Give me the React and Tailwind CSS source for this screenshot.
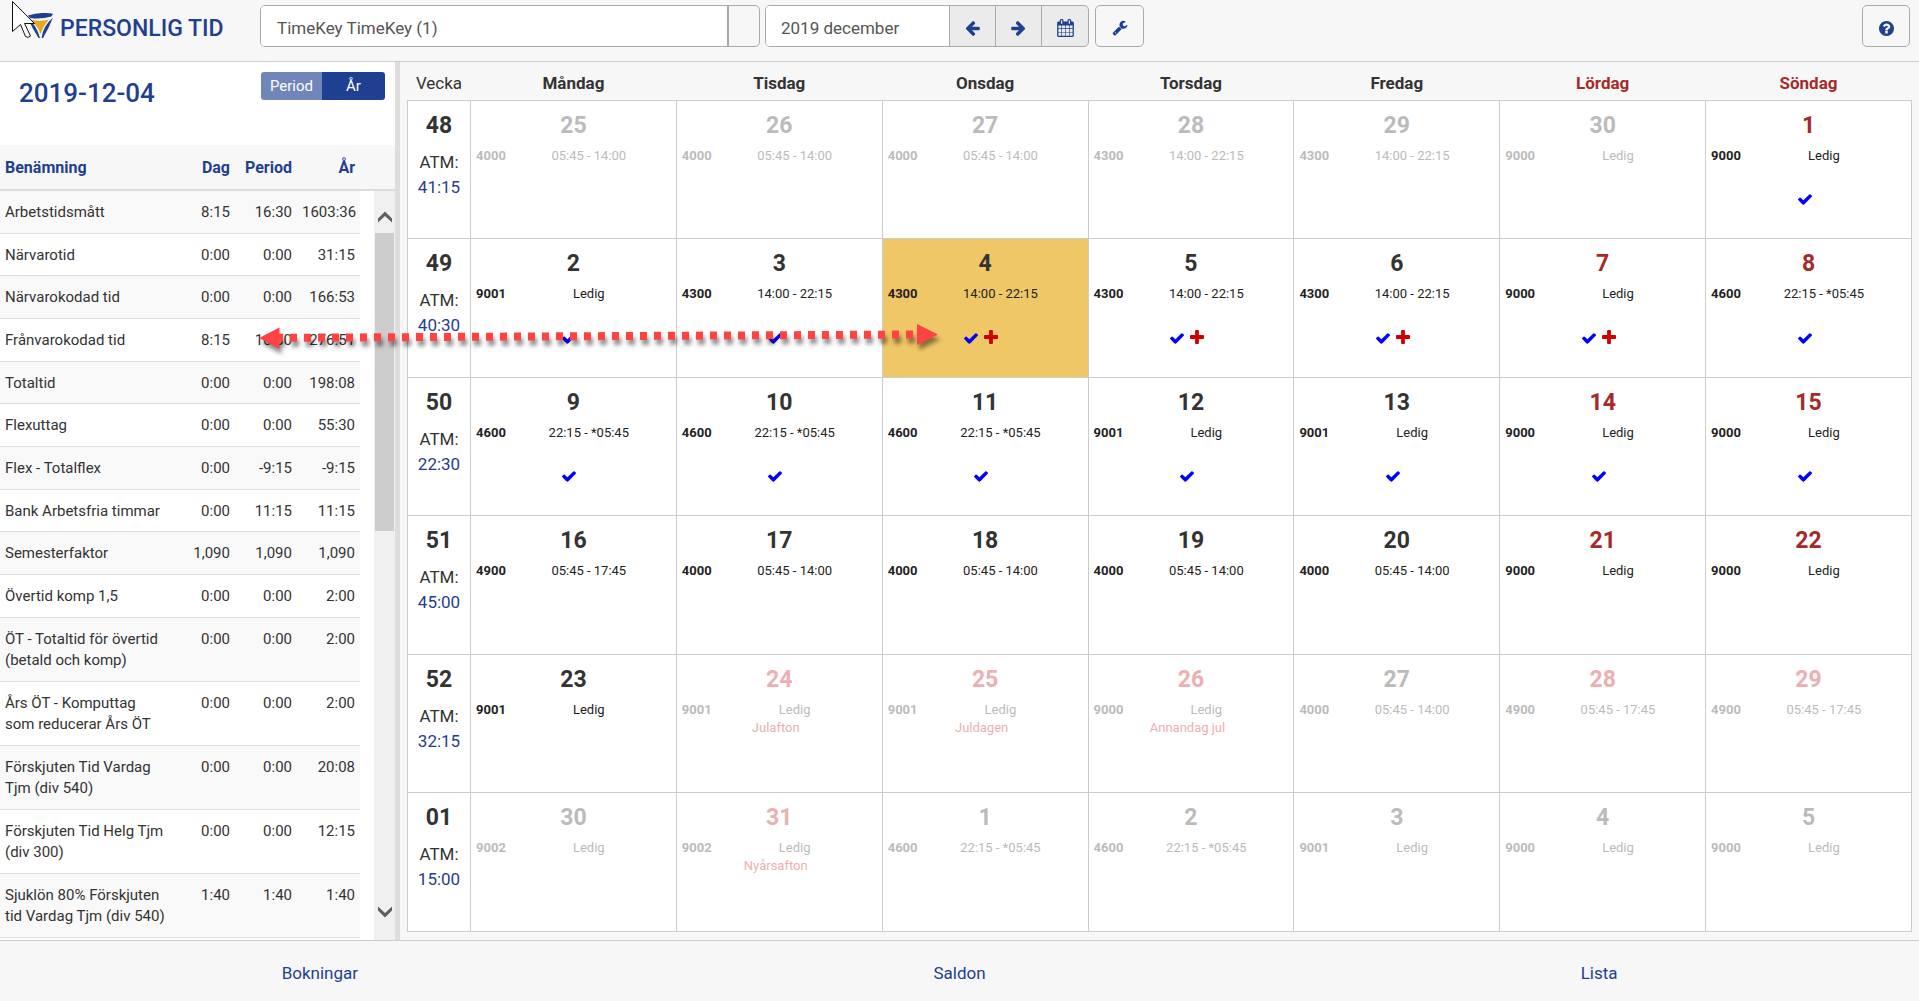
const balances = [
  ["Arbetstidsmått", "8:15", "16:30", "1603:36"],
  ["Närvarotid", "0:00", "0:00", "31:15"],
  ["Närvarokodad tid", "0:00", "0:00", "166:53"],
  ["Frånvarokodad tid", "8:15", "16:30", "276:51"],
  ["Totaltid", "0:00", "0:00", "198:08"],
  ["Flexuttag", "0:00", "0:00", "55:30"],
  ["Flex - Totalflex", "0:00", "-9:15", "-9:15"],
  ["Bank Arbetsfria timmar", "0:00", "11:15", "11:15"],
  ["Semesterfaktor", "1,090", "1,090", "1,090"],
  ["Övertid komp 1,5", "0:00", "0:00", "2:00"],
  ["ÖT - Totaltid för övertid (betald och komp)", "0:00", "0:00", "2:00"],
  ["Års ÖT - Komputtag som reducerar Års ÖT", "0:00", "0:00", "2:00"],
  ["Förskjuten Tid Vardag Tjm (div 540)", "0:00", "0:00", "20:08"],
  ["Förskjuten Tid Helg Tjm (div 300)", "0:00", "0:00", "12:15"],
  ["Sjuklön 80% Förskjuten tid Vardag Tjm (div 540)", "1:40", "1:40", "1:40"],
];

const weekdays = ["Måndag", "Tisdag", "Onsdag", "Torsdag", "Fredag", "Lördag", "Söndag"];

const MORNING = "05:45 - 14:00";
const EVENING = "14:00 - 22:15";
const NIGHT = "22:15 - *05:45";
const LONG = "05:45 - 17:45";
const OFF = "Ledig";

// Day: [number, shift code, hours, tone, marks, holiday]
// Tones: n = normal, r = red day, g = greyed, p = greyed red day
const weeks = [
  { no: "48", atm: "41:15", days: [
    [25, "4000", MORNING, "g"], [26, "4000", MORNING, "g"], [27, "4000", MORNING, "g"],
    [28, "4300", EVENING, "g"], [29, "4300", EVENING, "g"], [30, "9000", OFF, "g"], [1, "9000", OFF, "r", "c"]] },
  { no: "49", atm: "40:30", days: [
    [2, "9001", OFF, "n", "c"], [3, "4300", EVENING, "n", "c"], [4, "4300", EVENING, "n", "cp"],
    [5, "4300", EVENING, "n", "cp"], [6, "4300", EVENING, "n", "cp"], [7, "9000", OFF, "r", "cp"], [8, "4600", NIGHT, "r", "c"]] },
  { no: "50", atm: "22:30", days: [
    [9, "4600", NIGHT, "n", "c"], [10, "4600", NIGHT, "n", "c"], [11, "4600", NIGHT, "n", "c"],
    [12, "9001", OFF, "n", "c"], [13, "9001", OFF, "n", "c"], [14, "9000", OFF, "r", "c"], [15, "9000", OFF, "r", "c"]] },
  { no: "51", atm: "45:00", days: [
    [16, "4900", LONG, "n"], [17, "4000", MORNING, "n"], [18, "4000", MORNING, "n"],
    [19, "4000", MORNING, "n"], [20, "4000", MORNING, "n"], [21, "9000", OFF, "r"], [22, "9000", OFF, "r"]] },
  { no: "52", atm: "32:15", days: [
    [23, "9001", OFF, "n"], [24, "9001", OFF, "p", "", "Julafton"], [25, "9001", OFF, "p", "", "Juldagen"],
    [26, "9000", OFF, "p", "", "Annandag jul"], [27, "4000", MORNING, "g"], [28, "4900", LONG, "p"], [29, "4900", LONG, "p"]] },
  { no: "01", atm: "15:00", days: [
    [30, "9002", OFF, "g"], [31, "9002", OFF, "p", "", "Nyårsafton"], [1, "4600", NIGHT, "g"],
    [2, "4600", NIGHT, "g"], [3, "9001", OFF, "g"], [4, "9000", OFF, "g"], [5, "9000", OFF, "g"]] },
];

const numberTone = { n: "text-[#333]", r: "text-[#a52a2a]", g: "text-[#bbb]", p: "text-[#ecb0b0]" };
const detailTone = { n: "text-[#222]", r: "text-[#222]", g: "text-[#bbb]", p: "text-[#bbb]" };

function Logo() {
  return (
    <svg className="h-[26px] w-[26px] shrink-0" viewBox="0 0 26 26" aria-hidden="true">
      <path d="M0 2.500 Q13 -1.500 25 .8 L23.500 3.500 Q13 6.500 2 5 Z" fill="#1f4090" />
      <path d="M2 6.500 Q12 9 21 6.500 Q15 13 12.800 21 Q9 12 2 6.500Z" fill="#e6a820" />
      <path d="M25 4.500 Q21 15 15 25 H13.500 Q15 13 25 4.500Z M0 5.500 Q9 13 12 25 H10.500 Q4 15 0 5.500Z" fill="#1f4090" />
    </svg>
  );
}

function Pointer() {
  return (
    <svg className="pointer-events-none absolute left-3 top-0 h-[39px] w-[24px]" viewBox="0 0 24 39" aria-hidden="true">
      <path d="M.5 1.500 V31.500 L8.500 24.500 L13.500 36.500 Q16 38.500 18.500 36 L12.500 23.500 H22.500 Z" fill="#fff" stroke="#111" strokeWidth="1" />
    </svg>
  );
}

function ArrowIcon({ flip }) {
  return (
    <svg className={flip ? "h-[17px] w-[17px] rotate-180" : "h-[17px] w-[17px]"} viewBox="0 0 1792 1792" fill="#1f4090" aria-hidden="true">
      <path d="M1664 896v128q0 53-32.500 90.500t-84.500 37.500h-704l293 294q38 36 38 90t-38 90l-75 76q-37 37-90 37-52 0-91-37l-651-652q-37-37-37-90 0-52 37-91l651-650q38-38 91-38 52 0 90 38l75 74q38 38 38 91t-38 91l-293 293h704q52 0 84.500 37.500t32.500 90.500z" transform="translate(0 -64)" />
    </svg>
  );
}

function CalendarIcon() {
  return (
    <svg className="h-[18px] w-[17px]" viewBox="0 0 1664 1792" fill="#1f4090" aria-hidden="true">
      <path d="M128 1664h288v-288h-288v288zm352 0h320v-288h-320v288zm-352-352h288v-320h-288v320zm352 0h320v-320h-320v320zm-352-384h288v-288h-288v288zm736 736h320v-288h-320v288zm-384-736h320v-288h-320v288zm768 736h288v-288h-288v288zm-384-352h320v-320h-320v320zm-352-864v-288q0-13-9.500-22.500t-22.500-9.500h-64q-13 0-22.500 9.500t-9.500 22.500v288q0 13 9.500 22.500t22.500 9.500h64q13 0 22.500-9.500t9.500-22.500zm736 864h288v-320h-288v320zm-384-384h320v-288h-320v288zm384 0h288v-288h-288v288zm32-480v-288q0-13-9.500-22.500t-22.500-9.500h-64q-13 0-22.500 9.500t-9.500 22.500v288q0 13 9.500 22.500t22.500 9.500h64q13 0 22.500-9.500t9.500-22.500zm384-64v1280q0 52-38 90t-90 38h-1408q-52 0-90-38t-38-90v-1280q0-52 38-90t90-38h128v-96q0-66 47-113t113-47h64q66 0 113 47t47 113v96h384v-96q0-66 47-113t113-47h64q66 0 113 47t47 113v96h128q52 0 90 38t38 90z" />
    </svg>
  );
}

function WrenchIcon() {
  return (
    <svg className="h-4 w-4" viewBox="0 0 1664 1792" fill="#1f4090" aria-hidden="true">
      <path d="M384 1536q0-26-19-45t-45-19-45 19-19 45 19 45 45 19 45-19 19-45zm644-420l-682 682q-37 37-90 37-52 0-91-37l-106-108q-38-36-38-90 0-53 38-91l681-681q39 98 114.500 173.500t173.500 114.500zm634-435q0 39-23 106-47 134-164.500 217.500t-258.500 83.500q-185 0-316.500-131.500t-131.500-316.500 131.500-316.500 316.500-131.500q58 0 121.500 16.500t107.500 46.500q16 11 16 28t-16 28l-293 169v224l193 107q5-3 79-48.500t135.500-81 70.500-35.500q15 0 23.500 10t8.500 25z" transform="translate(0 -96)" />
    </svg>
  );
}

function HelpIcon() {
  return (
    <svg className="h-[15px] w-[15px]" viewBox="0 0 1536 1536" fill="#1f4090" aria-hidden="true">
      <path d="M896 1248v-192q0-14-9-23t-23-9h-192q-14 0-23 9t-9 23v192q0 14 9 23t23 9h192q14 0 23-9t9-23zm256-672q0-88-55.500-163t-138.500-116-170-41q-243 0-371 213-15 24 8 42l132 100q7 6 19 6 16 0 25-12 53-68 86-92 34-24 86-24 48 0 85.500 26t37.500 59q0 38-20 61t-68 45q-63 28-115.500 86.500t-52.500 125.500v36q0 14 9 23t23 9h192q14 0 23-9t9-23q0-19 21.500-49.500t54.500-49.500q32-18 49-28.500t46-35 44.500-48 28-60.500 12.500-81zm384 192q0 209-103 385.500t-279.500 279.500-385.500 103-385.500-103-279.500-279.500-103-385.500 103-385.500 279.500-279.500 385.500-103 385.500 103 279.500 279.500 103 385.500z" />
    </svg>
  );
}

function CheckIcon() {
  return (
    <svg className="h-[11px] w-[14px]" viewBox="121 334 1550 1188" fill="#00f" aria-label="Godkänd" role="img">
      <path d="M1671 566q0 40-28 68l-724 724-136 136q-28 28-68 28t-68-28l-136-136-362-362q-28-28-28-68t28-68l136-136q28-28 68-28t68 28l294 295 656-657q28-28 68-28t68 28l136 136q28 28 28 68z" />
    </svg>
  );
}

function PlusIcon() {
  return (
    <svg className="mb-[2px] h-[14px] w-[14px]" viewBox="192 128 1408 1408" fill="#d00000" aria-label="Tillägg" role="img">
      <path d="M1600 736v192q0 40-28 68t-68 28h-416v416q0 40-28 68t-68 28h-192q-40 0-68-28t-28-68v-416h-416q-40 0-68-28t-28-68v-192q0-40 28-68t68-28h416v-416q0-40 28-68t68-28h192q40 0 68 28t28 68v416h416q40 0 68 28t28 68z" />
    </svg>
  );
}

function Chevron({ down }) {
  return (
    <svg className={down ? "h-3 w-[14px] rotate-180" : "h-3 w-[14px]"} viewBox="0 0 14 12" aria-hidden="true">
      <path d="M0 7.500 L7 .5 L14 7.500 V11.500 L7 5 L0 11.500 Z" fill="#606060" />
    </svg>
  );
}

// Dashed two-way arrow that ties a balance row to the selected day
function LinkArrow() {
  return (
    <svg className="pointer-events-none absolute left-[250px] top-[315px] h-[45px] w-[700px] drop-shadow-[2px_5px_2px_rgba(0,0,0,0.45)]" viewBox="0 0 700 45" aria-hidden="true">
      <path d="M29 22.800 L666 19.500" stroke="#ff4242" strokeWidth="8" strokeDasharray="7 7" strokeDashoffset="3" />
      <path d="M9 23 L29.500 12.500 V34 Z M688 19.500 L667 9 V30 Z" fill="#ff4242" />
    </svg>
  );
}

function Header() {
  return (
    <header className="flex h-[62px] shrink-0 items-start border-b border-[#ccc] pr-[9px] pt-[5px]">
      <h1 className="flex h-[42px] w-[260px] shrink-0 items-center gap-[6px] pl-7 text-[23px] leading-6 font-medium text-[#1f4090]">
        <Logo />
        <span className="whitespace-nowrap pt-[5px]">PERSONLIG TID</span>
      </h1>
      <div className="flex h-[42px] w-[500px] shrink-0 overflow-hidden rounded-[5px] border border-[#aaa]">
        <input aria-label="Person" defaultValue="TimeKey TimeKey (1)" className="min-w-0 flex-1 bg-white px-4 pt-1 text-[17px] leading-7 text-[#555]" />
        <button type="button" aria-label="Välj person" className="w-8 border-l-2 border-[#aaa]" />
      </div>
      <div className="ml-[5px] flex h-[42px] w-[324px] shrink-0 overflow-hidden rounded-[5px] border border-[#aaa] bg-[#ebebeb]">
        <input aria-label="Månad" defaultValue="2019 december" className="min-w-0 flex-1 bg-white px-[15px] pt-1 text-[17px] leading-7 text-[#555]" />
        <button type="button" aria-label="Föregående" className="flex w-[46px] items-center justify-center border-l border-[#aaa] pt-1"><ArrowIcon /></button>
        <button type="button" aria-label="Nästa" className="flex w-[46px] items-center justify-center border-l border-[#aaa] pt-1"><ArrowIcon flip /></button>
        <button type="button" aria-label="Kalender" className="flex w-[47px] items-center justify-center border-l border-[#aaa] pt-1"><CalendarIcon /></button>
      </div>
      <button type="button" aria-label="Inställningar" className="ml-[6px] flex h-[42px] w-[49px] items-center justify-center rounded-[5px] border border-[#aaa] pt-1"><WrenchIcon /></button>
      <button type="button" aria-label="Hjälp" className="ml-auto flex h-[42px] w-12 items-center justify-center rounded-[5px] border border-[#aaa] pt-1"><HelpIcon /></button>
    </header>
  );
}

function Balances() {
  return (
    <aside className="flex w-[400px] shrink-0 flex-col border-r-[5px] border-[#ddd] bg-white">
      <div className="flex h-[83px] shrink-0 items-start justify-between pl-[19px] pr-[10px] pt-[10px]">
        <h2 className="pt-[3px] text-[26px] leading-9 font-medium text-[#1f4090]">2019-12-04</h2>
        <div className="flex h-7 w-[124px] overflow-hidden rounded-[3px] text-[15px] text-white">
          <button type="button" className="w-[61px] bg-[#7086b8] pt-px">Period</button>
          <button type="button" className="flex-1 bg-[#1f4090] pt-px">År</button>
        </div>
      </div>
      <div className="h-[46px] shrink-0 border-b-2 border-[#ddd] bg-[#f7f7f7]">
        <div className="flex h-11 w-[360px] items-center pt-[2px] text-right text-[16px] font-bold text-[#1f4090]">
          <span className="w-[172px] pl-[5px] text-left">Benämning</span>
          <span className="w-[63px] pr-[5px]">Dag</span>
          <span className="w-[62px] pr-[5px]">Period</span>
          <span className="w-[63px] pr-[5px]">År</span>
        </div>
      </div>
      <div className="flex min-h-0 flex-1">
        <div className="min-h-0 w-[360px] overflow-hidden pb-[2px]">
          <table className="h-full w-full table-fixed border-collapse text-[15px] leading-[21px] text-[#333]">
            <colgroup>
              <col className="w-[172px]" />
              <col className="w-[63px]" />
              <col className="w-[62px]" />
              <col className="w-[63px]" />
            </colgroup>
            <tbody>
              {balances.map(([name, ...values]) => (
                <tr key={name} className="border-b border-[#ddd] align-top odd:bg-[#f9f9f9]">
                  <td className="px-[5px] pt-[11px] pb-[9px]">{name}</td>
                  {values.map((value, i) => (
                    <td key={i} className="px-[5px] pt-[11px] pb-[9px] text-right whitespace-nowrap">{value}</td>
                  ))}
                </tr>
              ))}
            </tbody>
          </table>
        </div>
        <div className="ml-auto flex w-[21px] flex-col items-center bg-[#f0f0f0]">
          <button type="button" aria-label="Rulla upp" className="flex h-[42px] items-end pb-[10px]"><Chevron /></button>
          <div className="h-[298px] w-[19px] bg-[#cdcdcd]" />
          <button type="button" aria-label="Rulla ned" className="mt-auto flex h-[42px] items-start pt-2"><Chevron down /></button>
        </div>
      </div>
    </aside>
  );
}

function Day({ day }) {
  const [number, code, hours, tone, marks = "", holiday] = day;
  const selected = marks === "cp" && number === 4;
  return (
    <td className={selected ? "border border-[#ccc] bg-[#f0c766] p-0 align-top" : "border border-[#ccc] bg-white p-0 align-top"}>
      <div className={`pt-[9px] text-center text-[23px] leading-8 font-bold ${numberTone[tone]}`}>{number}</div>
      <div className={`mt-[5px] flex text-[13px] leading-[18px] ${detailTone[tone]}`}>
        <span className="w-[15%] pl-[5px] font-bold">{code}</span>
        <span className="w-[85%] text-center">{hours}</span>
      </div>
      {holiday && <div className="pr-[7px] text-center text-[13px] leading-[18px] text-[#ecb0b0]">{holiday}</div>}
      {marks && (
        <div className="mt-[27px] flex h-4 items-center justify-center gap-[6px] pr-2">
          <CheckIcon />
          {marks === "cp" && <PlusIcon />}
        </div>
      )}
    </td>
  );
}

function Calendar() {
  return (
    <main className="min-w-0 flex-1 pb-2 pl-[7px] pr-[7px]">
      <table className="h-full w-full table-fixed border-collapse text-[17px] text-[#333]">
        <thead>
          <tr className="h-[38px]">
            <th scope="col" className="w-[63px] p-0 pt-[6px] font-normal">Vecka</th>
            {weekdays.map((name, i) => (
              <th key={name} scope="col" className={i > 4 ? "p-0 pt-[6px] font-bold text-[#a52a2a]" : "p-0 pt-[6px] font-bold"}>{name}</th>
            ))}
          </tr>
        </thead>
        <tbody>
          {weeks.map((week) => (
            <tr key={week.no} className="h-[138px]">
              <th scope="row" className="border border-[#ccc] bg-white p-0 pt-[9px] text-center align-top font-normal">
                <div className="text-[23px] leading-8 font-bold">{week.no}</div>
                <div className="mt-2 leading-[25px]">ATM:</div>
                <a href="#vecka" className="block leading-[25px] text-[#1f4090]">{week.atm}</a>
              </th>
              {week.days.map((day) => <Day key={day[0]} day={day} />)}
            </tr>
          ))}
        </tbody>
      </table>
    </main>
  );
}

export default function App() {
  return (
    <div className="relative flex h-screen flex-col overflow-hidden bg-[#f7f7f7] font-[Roboto,sans-serif]">
      <Header />
      <div className="flex min-h-0 flex-1">
        <Balances />
        <Calendar />
      </div>
      <footer className="grid h-[61px] shrink-0 grid-cols-3 items-center border-t border-[#ccc] pt-[6px] text-center text-[17px] text-[#1f4090]">
        <a href="#bokningar">Bokningar</a>
        <a href="#saldon">Saldon</a>
        <a href="#lista">Lista</a>
      </footer>
      <LinkArrow />
      <Pointer />
    </div>
  );
}
